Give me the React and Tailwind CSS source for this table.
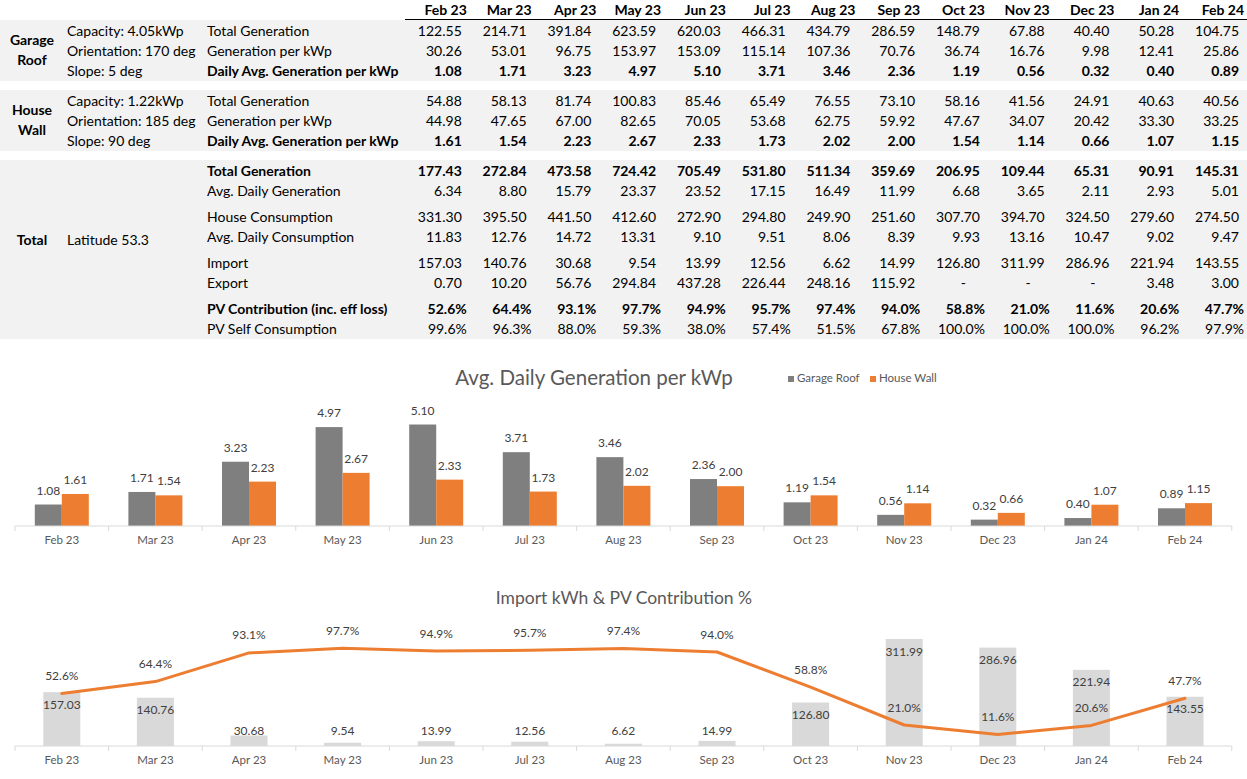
import React from 'react';

const months = ['Feb 23', 'Mar 23', 'Apr 23', 'May 23', 'Jun 23', 'Jul 23', 'Aug 23', 'Sep 23', 'Oct 23', 'Nov 23', 'Dec 23', 'Jan 24', 'Feb 24'];

const garage = [
    { label: 'Total Generation', values: ['122.55', '214.71', '391.84', '623.59', '620.03', '466.31', '434.79', '286.59', '148.79', '67.88', '40.40', '50.28', '104.75'] },
    { label: 'Generation per kWp', values: ['30.26', '53.01', '96.75', '153.97', '153.09', '115.14', '107.36', '70.76', '36.74', '16.76', '9.98', '12.41', '25.86'] },
    { label: 'Daily Avg. Generation per kWp', bold: true, values: ['1.08', '1.71', '3.23', '4.97', '5.10', '3.71', '3.46', '2.36', '1.19', '0.56', '0.32', '0.40', '0.89'] },
];

const house = [
    { label: 'Total Generation', values: ['54.88', '58.13', '81.74', '100.83', '85.46', '65.49', '76.55', '73.10', '58.16', '41.56', '24.91', '40.63', '40.56'] },
    { label: 'Generation per kWp', values: ['44.98', '47.65', '67.00', '82.65', '70.05', '53.68', '62.75', '59.92', '47.67', '34.07', '20.42', '33.30', '33.25'] },
    { label: 'Daily Avg. Generation per kWp', bold: true, values: ['1.61', '1.54', '2.23', '2.67', '2.33', '1.73', '2.02', '2.00', '1.54', '1.14', '0.66', '1.07', '1.15'] },
];

const totalGroups = [
    [
        { label: 'Total Generation', bold: true, values: ['177.43', '272.84', '473.58', '724.42', '705.49', '531.80', '511.34', '359.69', '206.95', '109.44', '65.31', '90.91', '145.31'] },
        { label: 'Avg. Daily Generation', values: ['6.34', '8.80', '15.79', '23.37', '23.52', '17.15', '16.49', '11.99', '6.68', '3.65', '2.11', '2.93', '5.01'] },
    ],
    [
        { label: 'House Consumption', values: ['331.30', '395.50', '441.50', '412.60', '272.90', '294.80', '249.90', '251.60', '307.70', '394.70', '324.50', '279.60', '274.50'] },
        { label: 'Avg. Daily Consumption', values: ['11.83', '12.76', '14.72', '13.31', '9.10', '9.51', '8.06', '8.39', '9.93', '13.16', '10.47', '9.02', '9.47'] },
    ],
    [
        { label: 'Import', values: ['157.03', '140.76', '30.68', '9.54', '13.99', '12.56', '6.62', '14.99', '126.80', '311.99', '286.96', '221.94', '143.55'] },
        { label: 'Export', values: ['0.70', '10.20', '56.76', '294.84', '437.28', '226.44', '248.16', '115.92', '-', '-', '-', '3.48', '3.00'] },
    ],
    [
        { label: 'PV Contribution (inc. eff loss)', bold: true, values: ['52.6%', '64.4%', '93.1%', '97.7%', '94.9%', '95.7%', '97.4%', '94.0%', '58.8%', '21.0%', '11.6%', '20.6%', '47.7%'] },
        { label: 'PV Self Consumption', values: ['99.6%', '96.3%', '88.0%', '59.3%', '38.0%', '57.4%', '51.5%', '67.8%', '100.0%', '100.0%', '100.0%', '96.2%', '97.9%'] },
    ],
];

const garageKwp = [1.08, 1.71, 3.23, 4.97, 5.10, 3.71, 3.46, 2.36, 1.19, 0.56, 0.32, 0.40, 0.89];
const houseKwp = [1.61, 1.54, 2.23, 2.67, 2.33, 1.73, 2.02, 2.00, 1.54, 1.14, 0.66, 1.07, 1.15];
const imports = [157.03, 140.76, 30.68, 9.54, 13.99, 12.56, 6.62, 14.99, 126.80, 311.99, 286.96, 221.94, 143.55];
const contrib = [52.6, 64.4, 93.1, 97.7, 94.9, 95.7, 97.4, 94.0, 58.8, 21.0, 11.6, 20.6, 47.7];

const font = { fontFamily: 'Lato, "Open Sans", sans-serif' };

const cellPad = (v) => {
    if (v === '-') return 'pr-[22px]';
    if (v.endsWith('%')) return 'pr-[3px]';
    return 'pr-[8px]';
};

const DataRow = ({ row }) => (
    <div className={`flex h-[20px] items-center ${row.bold ? 'font-bold' : ''}`}>
        <div className="w-[201px] shrink-0 pl-[3px] whitespace-nowrap">{row.label}</div>
        <div className="flex-1 grid grid-cols-[repeat(13,minmax(0,1fr))]">
            {row.values.map((v, i) => (
                <div key={i} className={`text-right ${cellPad(v)}`}>{v}</div>
            ))}
        </div>
    </div>
);

const ArrayBlock = ({ name, specs, rows }) => (
    <div className="flex bg-[#f2f2f2] pb-px">
        <div className="w-[64px] flex items-center justify-center text-center font-bold leading-[20px]">{name}</div>
        <div className="w-[140px] pl-[3px]">
            {specs.map((s) => (
                <div key={s} className="h-[20px] flex items-center whitespace-nowrap">{s}</div>
            ))}
        </div>
        <div className="flex-1">
            {rows.map((r) => <DataRow key={r.label} row={r} />)}
        </div>
    </div>
);

const axisX0 = 15;
const catW = 93.6;
const cx = (i) => axisX0 + catW * (i + 0.5);

const Axis = () => (
    <g>
        <line x1={axisX0} x2={axisX0 + catW * 13} y1={187} y2={187} stroke="#d9d9d9" strokeWidth="1" />
        {Array.from({ length: 14 }).map((_, i) => (
            <line key={i} x1={axisX0 + catW * i} x2={axisX0 + catW * i} y1={187} y2={192} stroke="#d9d9d9" strokeWidth="1" />
        ))}
        {months.map((m, i) => (
            <text key={m} x={cx(i)} y={202} textAnchor="middle" dominantBaseline="middle" fontSize="11.5" fill="#595959">{m}</text>
        ))}
    </g>
);

const GenerationChart = () => (
    <svg width="1247" height="220" viewBox="0 0 1247 220" className="block" style={font}>
        <text x={594} y={41} textAnchor="middle" dominantBaseline="middle" fontSize="20.5" fill="#595959">Avg. Daily Generation per kWp</text>
        <rect x={788} y={37} width={6} height={6} fill="#7f7f7f" />
        <text x={797} y={40} dominantBaseline="middle" fontSize="11.5" fill="#595959">Garage Roof</text>
        <rect x={870} y={37} width={6} height={6} fill="#ed7d31" />
        <text x={879} y={40} dominantBaseline="middle" fontSize="11.5" fill="#595959">House Wall</text>
        {months.map((m, i) => {
            const g = garageKwp[i] * 19.9;
            const h = houseKwp[i] * 19.9;
            return (
                <g key={m}>
                    <rect x={cx(i) - 27} y={187 - g} width={27} height={g} fill="#7f7f7f" />
                    <rect x={cx(i)} y={187 - h} width={27} height={h} fill="#ed7d31" />
                    <text x={cx(i) - 13.5} y={187 - g - 13} textAnchor="middle" dominantBaseline="middle" fontSize="12" fill="#404040">{garageKwp[i].toFixed(2)}</text>
                    <text x={cx(i) + 13.5} y={187 - h - 13} textAnchor="middle" dominantBaseline="middle" fontSize="12" fill="#404040">{houseKwp[i].toFixed(2)}</text>
                </g>
            );
        })}
        <Axis />
    </svg>
);

const ImportChart = () => {
    const pts = contrib.map((p, i) => `${cx(i)},${187 - p}`).join(' ');
    return (
        <svg width="1247" height="219" viewBox="0 0 1247 219" className="block" style={font}>
            <text x={624} y={41} textAnchor="middle" dominantBaseline="middle" fontSize="17.5" fill="#595959">Import kWh &amp; PV Contribution %</text>
            {imports.map((v, i) => {
                const h = v * 0.343;
                return <rect key={i} x={cx(i) - 18.5} y={187 - h} width={37} height={h} fill="#d9d9d9" />;
            })}
            <polyline points={pts} fill="none" stroke="#ed7d31" strokeWidth="3" strokeLinejoin="round" strokeLinecap="round" />
            {imports.map((v, i) => (
                <text key={i} x={cx(i)} y={Math.min(187 - v * 0.343 + 13.5, 173)} textAnchor="middle" dominantBaseline="middle" fontSize="12" fill="#404040">{v.toFixed(2)}</text>
            ))}
            {contrib.map((p, i) => (
                <text key={i} x={cx(i)} y={187 - p - 16.5} textAnchor="middle" dominantBaseline="middle" fontSize="12" fill="#404040">{p.toFixed(1)}%</text>
            ))}
            <Axis />
        </svg>
    );
};

const App = () => {
    return (
        <div className="w-[1247px] h-[779px] bg-white text-black text-[14px] overflow-hidden" style={font}>
            <div className="flex h-[20px] items-center">
                <div className="w-[405px] shrink-0" />
                <div className="flex-1 grid grid-cols-[repeat(13,minmax(0,1fr))] h-full border-b border-black font-bold">
                    {months.map((m) => (
                        <div key={m} className="text-right pr-[3px] leading-[20px]">{m}</div>
                    ))}
                </div>
            </div>

            <ArrayBlock name={<>Garage<br />Roof</>} specs={['Capacity: 4.05kWp', 'Orientation: 170 deg', 'Slope: 5 deg']} rows={garage} />
            <div className="h-[9px]" />
            <ArrayBlock name={<>House<br />Wall</>} specs={['Capacity: 1.22kWp', 'Orientation: 185 deg', 'Slope: 90 deg']} rows={house} />
            <div className="h-[9px]" />

            <div className="flex bg-[#f2f2f2]">
                <div className="w-[64px]">
                    <div className="mt-[69px] h-[20px] flex items-center justify-center font-bold">Total</div>
                </div>
                <div className="w-[140px] pl-[3px]">
                    <div className="mt-[69px] h-[20px] flex items-center">Latitude 53.3</div>
                </div>
                <div className="flex-1 flex flex-col gap-[6px] pb-px">
                    {totalGroups.map((g, gi) => (
                        <div key={gi}>
                            {g.map((r) => <DataRow key={r.label} row={r} />)}
                        </div>
                    ))}
                </div>
            </div>

            <GenerationChart />
            <ImportChart />
        </div>
    );
};

export default App;
